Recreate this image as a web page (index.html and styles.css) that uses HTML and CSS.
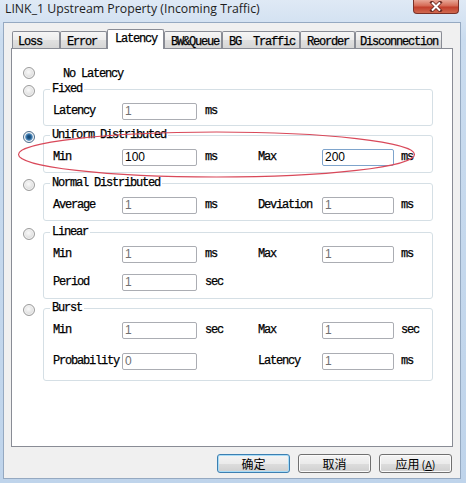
FILE: index.html
```html
<!DOCTYPE html>
<html>
<head>
<meta charset="utf-8">
<link rel="stylesheet" href="styles.css">
</head>
<body>
<div class="window">
  <div class="titlebar">
    <span class="title">LINK_1 Upstream Property (Incoming Traffic)</span>
    <div class="close">
      <svg width="16" height="11" viewBox="0 0 16 11"><path d="M4 1.5 L12 9.5 M12 1.5 L4 9.5" stroke="#6b2a22" stroke-width="3.6" stroke-linecap="square"/><path d="M4 1.5 L12 9.5 M12 1.5 L4 9.5" stroke="#ffffff" stroke-width="2"/></svg>
    </div>
  </div>
  <div class="client">
    <div class="tabs">
      <div class="tab tab-loss">Loss</div>
      <div class="tab tab-error">Error</div>
      <div class="tab tab-latency selected">Latency</div>
      <div class="tab tab-bw">BW&amp;Queue</div>
      <div class="tab tab-bg">BG&nbsp;&nbsp;Traffic</div>
      <div class="tab tab-reorder">Reorder</div>
      <div class="tab tab-disc">Disconnection</div>
    </div>
    <div class="panel">
      <div class="opt opt-none">
        <span class="radio"></span>
        <span class="opt-label">No Latency</span>
      </div>
      <div class="opt opt-fixed">
        <span class="radio"></span>
        <div class="group">
          <span class="legend">Fixed</span>
          <div class="row"><span class="lbl">Latency</span><span class="input">1</span><span class="unit">ms</span></div>
        </div>
      </div>
      <div class="opt opt-uniform">
        <span class="radio checked"></span>
        <div class="group">
          <span class="legend">Uniform Distributed</span>
          <div class="row"><span class="lbl">Min</span><span class="input on">100</span><span class="unit">ms</span><span class="lbl">Max</span><span class="input on focus">200</span><span class="unit unit2">ms</span></div>
        </div>
      </div>
      <div class="opt opt-normal">
        <span class="radio"></span>
        <div class="group">
          <span class="legend">Normal Distributed</span>
          <div class="row"><span class="lbl">Average</span><span class="input">1</span><span class="unit">ms</span><span class="lbl">Deviation</span><span class="input">1</span><span class="unit unit2">ms</span></div>
        </div>
      </div>
      <div class="opt opt-linear">
        <span class="radio"></span>
        <div class="group">
          <span class="legend">Linear</span>
          <div class="row"><span class="lbl">Min</span><span class="input">1</span><span class="unit">ms</span><span class="lbl">Max</span><span class="input">1</span><span class="unit unit2">ms</span></div>
          <div class="row"><span class="lbl">Period</span><span class="input">1</span><span class="unit">sec</span></div>
        </div>
      </div>
      <div class="opt opt-burst">
        <span class="radio"></span>
        <div class="group">
          <span class="legend">Burst</span>
          <div class="row"><span class="lbl">Min</span><span class="input">1</span><span class="unit">sec</span><span class="lbl">Max</span><span class="input">1</span><span class="unit unit2">sec</span></div>
          <div class="row"><span class="lbl">Probability</span><span class="input">0</span><span class="unit"></span><span class="lbl">Latency</span><span class="input">1</span><span class="unit unit2">ms</span></div>
        </div>
      </div>
    </div>
    <div class="buttons">
      <div class="btn btn-default">确定</div>
      <div class="btn">取消</div>
      <div class="btn">应用<span class="acc">(<u>A</u>)</span></div>
    </div>
  </div>
  <svg class="mark" width="466" height="483" viewBox="0 0 466 483"><ellipse cx="216.5" cy="154.5" rx="198" ry="22.5" fill="none" stroke="#d9495a" stroke-width="1.2"/></svg>
</div>
</body>
</html>
```
FILE: styles.css
```css
* { box-sizing: border-box; }
body {
  margin: 0;
  width: 466px;
  height: 483px;
  overflow: hidden;
  font-family: "Liberation Mono", monospace;
  color: #000;
}
.window {
  position: relative;
  width: 466px;
  height: 483px;
  background: linear-gradient(#dfe9f5, #cadcef 40px, #bfd4eb);
  display: flex;
  flex-direction: column;
}
.titlebar {
  height: 22px;
  flex: none;
  display: flex;
  justify-content: space-between;
  align-items: flex-start;
  padding-left: 5px;
  padding-right: 7px;
}
.title {
  font-family: "Open Sans", "Noto Sans", sans-serif;
  font-size: 12.3px;
  line-height: 16px;
  padding-top: 1px;
  color: #1e1e1e;
}
.close {
  width: 46px;
  height: 14px;
  border: 1px solid #7a3128;
  border-top: none;
  border-radius: 0 0 4px 4px;
  background: linear-gradient(#e8a797, #d56a55 45%, #c23f2c 55%, #d0694f);
  display: flex;
  align-items: center;
  justify-content: center;
}
.client {
  flex: 1;
  margin: 0 5px 4px 3px;
  border: 1px solid #95a9c1;
  background: #f0f0f0;
  padding: 6px 7px 5px 7px;
  display: flex;
  flex-direction: column;
}
.tabs {
  height: 19px;
  flex: none;
  display: flex;
  align-items: flex-end;
  padding-left: 1px;
  position: relative;
  z-index: 1;
}
.tab {
  height: 17px;
  border: 1px solid #898c95;
  border-bottom: none;
  border-radius: 2px 2px 0 0;
  background: linear-gradient(#f6f6f6, #ececec 50%, #e0e0e0 52%, #d6d6d6);
  font-size: 12px;
  letter-spacing: -1.2px;
  line-height: 14px;
  padding: 3px 0 0 6px;
  white-space: nowrap;
  -webkit-text-stroke: 0.25px #000;
}
.tab.selected {
  height: 20px;
  margin-bottom: -1px;
  background: #fff;
  padding-top: 2px;
  padding-left: 7px;
}
.tab-loss { width: 48px; padding-left: 5px; }
.tab-error { width: 47px; }
.tab-latency { width: 57px; }
.tab-bw { width: 58px; }
.tab-bg { width: 78px; }
.tab-reorder { width: 55px; }
.tab-disc { width: 87px; padding-left: 4px; }

.panel {
  height: 399px;
  flex: none;
  border: 1px solid #898c95;
  background: #fff;
  padding: 18px 0 0 11px;
}
.opt {
  display: flex;
  align-items: flex-start;
  font-size: 12px;
  letter-spacing: -1.2px;
  -webkit-text-stroke: 0.25px #000;
}
.opt-fixed { margin-top: 6px; }
.opt-uniform { margin-top: 5px; }
.opt-normal { margin-top: 6px; }
.opt-linear { margin-top: 7px; }
.opt-burst { margin-top: 5px; }
.radio {
  flex: none;
  width: 12px;
  height: 12px;
  border: 1px solid #9c9c9c;
  border-radius: 50%;
  background: radial-gradient(circle at 45% 40%, #fafafa 0, #e6e6e6 45%, #cfcfcf 100%);
  box-shadow: inset 0 0 0 1px #f4f4f4;
}
.radio.checked {
  border-color: #4d6e8d;
  background: radial-gradient(circle, #123f6b 0, #1f5c8f 2px, #5d94c4 3.4px, #e8eef4 4.4px, #d6d6d6 100%);
}
.opt-label {
  margin-left: 28px;
  margin-top: 1px;
  margin-bottom: -1px;
  line-height: 12px;
}
.group {
  width: 390px;
  margin-left: 8px;
  margin-top: 4px;
  border: 1px solid #d5dfe5;
  border-radius: 3px;
  padding: 0 0 7px 9px;
}
.opt-fixed .group { padding-bottom: 6px; }
.opt-linear .group { padding-bottom: 8px; }
.opt-burst .group { padding-bottom: 11px; }
.legend {
  display: block;
  width: max-content;
  height: 14px;
  line-height: 14px;
  margin: -8px 0 6px -3px;
  padding: 0 2px;
  background: #fff;
}
.row {
  display: grid;
  grid-template-columns: 69px 75px 61px 64px 72px auto;
  align-items: center;
  height: 17px;
}
.row + .row { margin-top: 11px; }
.opt-burst .row + .row { margin-top: 14px; }
.lbl { line-height: 18px; white-space: nowrap; }
.unit { padding-left: 8px; line-height: 18px; }
.unit2 { padding-left: 7px; }
.input {
  height: 17px;
  border: 1px solid #abadb3;
  border-radius: 2px;
  background: #fff;
  font-family: "Liberation Sans", Arial, sans-serif;
  letter-spacing: 0;
  -webkit-text-stroke: 0;
  font-size: 12px;
  line-height: 15px;
  padding-left: 2px;
  color: #707070;
}
.input.on { color: #000; }
.input.focus { border-color: #7ea4cc; }

.buttons {
  display: flex;
  justify-content: flex-end;
  gap: 8px;
  margin-top: 7px;
  padding-right: 1px;
}
.btn {
  width: 73px;
  height: 19px;
  border: 1px solid #707070;
  border-radius: 3px;
  background: linear-gradient(#f4f4f4, #ebebeb 50%, #dddddd 52%, #cfcfcf);
  box-shadow: inset 0 0 0 1px #fbfbfb;
  font-family: "Noto Sans CJK SC", sans-serif;
  font-size: 12px;
  line-height: 17px;
  text-align: center;
}
.btn-default {
  border-color: #3c7fb1;
  box-shadow: inset 0 0 0 1px #a8dcf7;
}
.acc { font-size: 11px; margin-left: 2px; }
.mark {
  position: absolute;
  left: 0;
  top: 0;
  pointer-events: none;
}
```
